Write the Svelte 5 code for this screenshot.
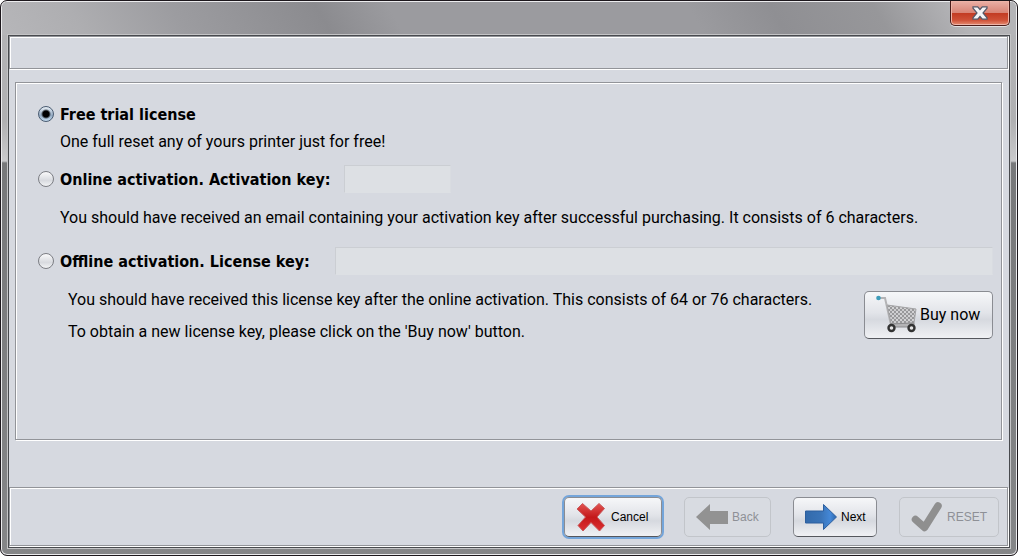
<script lang="ts">
    let license = $state("trial");
    let activationKey = $state("");
    let licenseKey = $state("");
</script>

<div class="window">
    <div class="titlebar">
        <button class="close" aria-label="Close">
            <svg width="16" height="14" viewBox="0 0 16 14">
                <path
                    d="M1 .8h4.700L8 3.500 10.300.8H15v1.400L11 7l4 4.800v1.400h-4.700L8 10.500l-2.300 2.700H1v-1.400L5 7 1 2.200z"
                    fill="#f4f4f6"
                    stroke="#535666"
                    stroke-width="1.200"
                />
            </svg>
        </button>
    </div>

    <div class="client">
        <div class="header etched"></div>

        <main class="options etched">
            <div class="option first">
                <input id="trial" type="radio" value="trial" bind:group={license} />
                <label for="trial">Free trial license</label>
            </div>
            <p class="hint">One full reset any of yours printer just for free!</p>

            <div class="option">
                <input id="online" type="radio" value="online" bind:group={license} />
                <label for="online">Online activation. Activation key:</label>
                <input
                    class="key short"
                    type="text"
                    aria-label="Activation key"
                    maxlength="6"
                    disabled={license !== "online"}
                    bind:value={activationKey}
                />
            </div>
            <p class="hint wide">
                You should have received an email containing your activation key after successful purchasing. It consists of 6 characters.
            </p>

            <div class="option">
                <input id="offline" type="radio" value="offline" bind:group={license} />
                <label for="offline">Offline activation. License key:</label>
                <input
                    class="key long"
                    type="text"
                    aria-label="License key"
                    maxlength="76"
                    disabled={license !== "offline"}
                    bind:value={licenseKey}
                />
            </div>
            <div class="purchase">
                <div class="notes">
                    <p>You should have received this license key after the online activation. This consists of 64 or 76 characters.</p>
                    <p>To obtain a new license key, please click on the 'Buy now' button.</p>
                </div>
                <button class="btn buy">
                    <svg width="42" height="40" viewBox="0 0 42 40">
                        <defs>
                            <pattern id="mesh" width="4" height="4" patternUnits="userSpaceOnUse">
                                <rect width="4" height="4" fill="#98989a" />
                                <circle cx="1" cy="1" r="1" fill="#e6e6e8" />
                                <circle cx="3" cy="3" r="1" fill="#dcdcde" />
                            </pattern>
                        </defs>
                        <path d="M3 3h6l6 27" fill="none" stroke="#b4b4b6" stroke-width="2" />
                        <path d="M11 10l29 4-2 14-23 1z" fill="url(#mesh)" stroke="#a4a4a6" />
                        <path d="M14 29l24-1v4H15z" fill="#b4b4b6" stroke="#8c8c8e" />
                        <circle cx="2.500" cy="3" r="2.300" fill="#3d9cba" />
                        <circle cx="15.500" cy="33" r="3" fill="#e4e4e4" stroke="#333" stroke-width="2.400" />
                        <circle cx="35.500" cy="33" r="3" fill="#e4e4e4" stroke="#333" stroke-width="2.400" />
                    </svg>
                    Buy now
                </button>
            </div>
        </main>

        <footer class="actions etched">
            <button class="btn cancel">
                <svg width="31" height="32" viewBox="0 0 31 32">
                    <defs>
                        <linearGradient id="red" x1="0" y1="0" x2="0" y2="1">
                            <stop offset="0" stop-color="#e25452" />
                            <stop offset=".5" stop-color="#c4181a" />
                            <stop offset="1" stop-color="#dc3032" />
                        </linearGradient>
                    </defs>
                    <path
                        d="M6.500 2.500L15 10l8-7.500 5.500 5-7.500 8.500 7.500 8.500-5 5.500L15 21.500 7 30l-5-5.500L9.500 16 1 8z"
                        fill="url(#red)"
                        stroke="#c85a5c"
                        stroke-linejoin="round"
                    />
                </svg>
                Cancel
            </button>
            <button class="btn back" disabled>
                <svg width="32" height="32" viewBox="0 0 32 32">
                    <path d="M0 16L14 3v7h18v13H14v6z" fill="#929292" />
                </svg>
                Back
            </button>
            <button class="btn next">
                <svg width="32" height="32" viewBox="0 0 32 32">
                    <defs>
                        <linearGradient id="blue">
                            <stop offset="0" stop-color="#336aab" />
                            <stop offset=".5" stop-color="#3a74b8" />
                            <stop offset=".8" stop-color="#4488d8" />
                            <stop offset="1" stop-color="#2a65ac" />
                        </linearGradient>
                    </defs>
                    <path d="M31.500 16L18.500 3.500V10H.5v12h18v6.500z" fill="url(#blue)" stroke="#2d5f9e" />
                </svg>
                Next
            </button>
            <button class="btn reset" disabled>
                <svg width="32" height="32" viewBox="0 0 32 32">
                    <path
                        d="M4.500 18.500l9 8L27 5"
                        fill="none"
                        stroke="#8f8f8f"
                        stroke-width="7.500"
                        stroke-linecap="round"
                        stroke-linejoin="round"
                    />
                </svg>
                RESET
            </button>
        </footer>
    </div>
</div>

<style>
    :global(body) {
        background: #fff;
    }

    .window {
        box-sizing: border-box;
        min-height: 100vh;
        display: flex;
        flex-direction: column;
        padding: 0 7px 7px;
        border: 1px solid #1c171c;
        border-radius: 7px;
        box-shadow: inset 0 0 0 1px #ececee;
        background: linear-gradient(#b4b4b7, #b0b0b2 120px, #cacacc 160px, #77787a 162px, #858688);
    }

    .titlebar {
        display: flex;
        justify-content: flex-end;
        height: 33px;
        margin: 1px -6px 0;
        padding-right: 6px;
        border-radius: 5px 5px 0 0;
        background: linear-gradient(
            60deg,
            #b6b6b9,
            #aeaeb1 8%,
            #9c9ca0 18%,
            #8b8b8f 32%,
            #9b9b9f 39%,
            #9b9b9f 68%,
            #8f8f93 76%,
            #97979a 86%,
            #b4b4b7 94%
        );
    }

    .close {
        box-sizing: border-box;
        width: 60px;
        height: 25px;
        margin-top: -1px;
        padding: 0;
        display: flex;
        justify-content: center;
        align-items: center;
        border: 1px solid #4a1c1a;
        border-top: none;
        border-radius: 0 0 5px 5px;
        background: linear-gradient(#eab0a6, #d98577 48%, #c23a22 50%, #cf5138 80%, #e58c72);
        box-shadow: inset 0 0 0 1px #eeb4a8, 0 1px #e0e0e2;
    }

    .client {
        flex: 1;
        display: flex;
        flex-direction: column;
        border: 1px solid #484a4e;
        box-shadow: 0 0 0 1px #c4c4c6;
        background: #d6d9e0;
    }

    .etched {
        border: 1px solid #929499;
        box-shadow: inset 1px 1px #fff, 1px 1px #fff;
    }

    .header {
        height: 31px;
        margin-right: 1px;
    }

    .options {
        flex: 1;
        margin: 13px 7px 47px 6px;
        padding: 20px 8px 0 22px;
        font: 16px/20px Roboto, sans-serif;
        color: #000;
    }

    .option {
        display: flex;
        align-items: center;
        height: 28px;
    }

    .option.first {
        height: 22px;
    }

    .option label {
        margin-left: 6px;
        padding-top: 2px;
        font: bold 16px/20px "DejaVu Sans Condensed", "Noto Sans", sans-serif;
    }

    input[type="radio"] {
        appearance: none;
        flex: none;
        width: 16px;
        height: 16px;
        margin: 0;
        border: 1px solid #7c7e84;
        border-radius: 50%;
        background: linear-gradient(#fafafb, #d8dadf 60%, #f2f3f5);
    }

    input[type="radio"]:checked {
        border-color: #4a5c72;
        background: radial-gradient(circle, #000 3px, transparent 5px),
            linear-gradient(#e8eff6, #94aac2 60%, #c4dcf0);
    }

    .key {
        box-sizing: border-box;
        height: 28px;
        border: 1px solid #cbced3;
        border-right-color: #d9dce1;
        border-bottom-color: #dde0e4;
        padding: 2px 6px;
        background: #dde0e4;
        font: inherit;
    }

    .short {
        width: 107px;
        margin-left: 13px;
    }

    .long {
        flex: 1;
        min-width: 0;
        margin-left: 25px;
    }

    p {
        margin: 0;
    }

    .hint {
        margin: 7px 0 13px 22px;
    }

    .hint.wide {
        margin: 15px 0 19px 22px;
    }

    .purchase {
        display: flex;
        justify-content: space-between;
        margin-top: 15px;
    }

    .notes {
        display: flex;
        flex-direction: column;
        gap: 12px;
        padding-left: 30px;
    }

    .btn {
        box-sizing: border-box;
        flex: none;
        display: flex;
        align-items: center;
        gap: 4px;
        height: 40px;
        padding: 0 8px 0 11px;
        border: 1px solid #8a8c92;
        border-bottom-color: #55575d;
        border-radius: 5px;
        background: linear-gradient(#f6f7f9, #e2e4e9 45%, #d6d9df 60%, #f0f1f4);
        font: 12px/16px "Liberation Sans", Arial, sans-serif;
        color: #000;
        white-space: nowrap;
    }

    .btn:disabled {
        border-color: #c2c5ca;
        background: #d8dbe1;
        color: #8e9096;
    }

    .buy {
        height: 48px;
        width: 129px;
        margin-top: 1px;
        gap: 2px;
        font: 16px/20px Roboto, sans-serif;
    }

    .actions {
        box-sizing: border-box;
        display: flex;
        justify-content: flex-end;
        align-items: center;
        gap: 22px;
        height: 59px;
        margin: 0 1px 1px 0;
        padding-right: 8px;
    }

    .cancel {
        width: 98px;
        box-shadow: 0 0 0 2px #74a5da;
    }

    .back {
        width: 87px;
    }

    .next {
        width: 84px;
    }

    .reset {
        width: 100px;
    }
</style>
